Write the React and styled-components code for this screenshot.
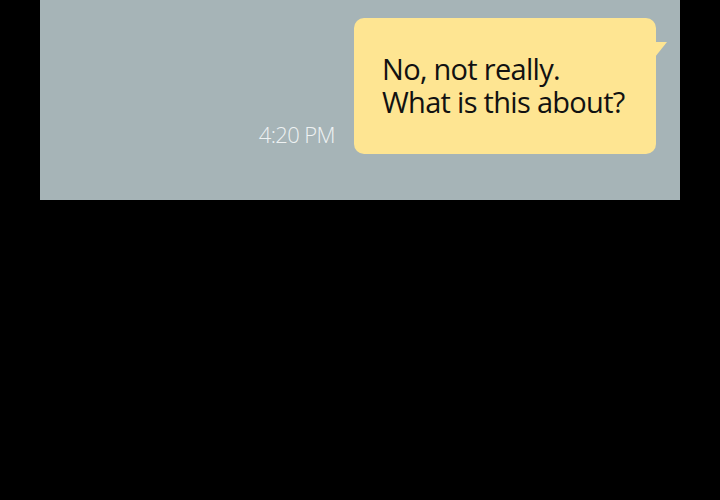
import styled, { createGlobalStyle } from 'styled-components'

const GlobalStyle = createGlobalStyle`
  html, body {
    margin: 0;
    padding: 0;
    background: #000;
  }
  body {
    width: 720px;
    height: 500px;
    overflow: hidden;
    font-family: 'Open Sans', 'Noto Sans', sans-serif;
  }
`

const Page = styled.div`
  width: 720px;
  height: 500px;
  background: #000;
`

const ChatPanel = styled.div`
  margin: 0 40px;
  height: 200px;
  background: #a6b4b7;
  display: flex;
  justify-content: flex-end;
  align-items: flex-start;
  padding: 18px 24px 0 0;
  box-sizing: border-box;
`

const MessageRow = styled.div`
  display: flex;
  align-items: flex-end;
  gap: 19px;
`

const Time = styled.span`
  font-size: 22px;
  line-height: 30px;
  font-weight: 300;
  color: #eef2f3;
  letter-spacing: -0.6px;
  margin-bottom: 5px;
`

const Bubble = styled.div`
  position: relative;
  background: #fee592;
  border-radius: 10px;
  padding: 34px 20px 36px 28px;
  width: 302px;
  box-sizing: border-box;
  font-size: 29px;
  line-height: 33px;
  color: #111;
  letter-spacing: -0.7px;
  white-space: nowrap;
`

const Tail = styled.svg`
  position: absolute;
  top: 24px;
  right: -11px;
`

function App() {
  return (
    <Page>
      <GlobalStyle />
      <ChatPanel>
        <MessageRow>
          <Time>4:20 PM</Time>
          <Bubble>
            No, not really.
            <br />
            What is this about?
            <Tail width="12" height="15" viewBox="0 0 12 15">
              <polygon points="0,0 12,0 0,15" fill="#fee592" />
            </Tail>
          </Bubble>
        </MessageRow>
      </ChatPanel>
    </Page>
  )
}

export default App
